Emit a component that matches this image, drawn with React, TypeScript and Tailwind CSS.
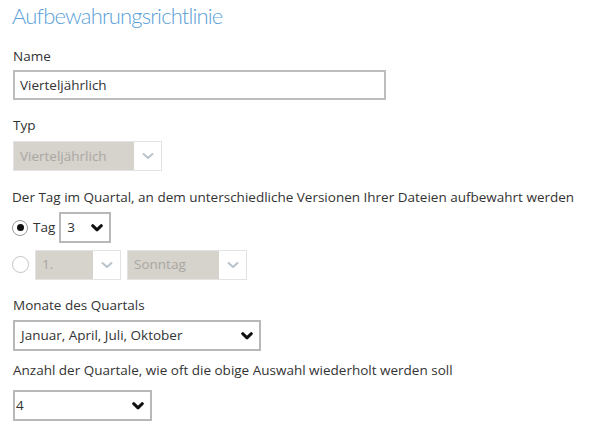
import React from "react";

const Chevron = () => (
  <svg width="12" height="8" viewBox="0 0 12 8">
    <path d="M1.7 1.7 L6 5.8 L10.3 1.7" fill="none" stroke="#111" strokeWidth="3" strokeLinecap="round" strokeLinejoin="round" />
  </svg>
);

const ThinChevron = () => (
  <svg width="12" height="8" viewBox="0 0 12 8">
    <path d="M1.5 2 L6 6 L10.5 2" fill="none" stroke="#b9c4cc" strokeWidth="2" strokeLinecap="round" strokeLinejoin="round" />
  </svg>
);

const DisabledSelect = ({ text, w, arrowW }: { text: string; w: string; arrowW: string }) => (
  <div className={`flex h-[30px] ${w} border border-[#e3e3e3]`}>
    <div className="flex-1 bg-[#d6d2cc] flex items-center pl-[6px] text-[#aaa7a3] text-[13.5px]">{text}</div>
    <div className={`${arrowW} bg-white flex items-center justify-center`}>
      <ThinChevron />
    </div>
  </div>
);

const Select = ({ text, w, pl = "pl-[6px]" }: { text: string; w: string; pl?: string }) => (
  <div className={`flex items-center justify-between h-[31px] ${w} border-2 border-[#b8b8b8] ${pl} pr-[6px] text-[13.5px] text-[#333]`}>
    <span>{text}</span>
    <Chevron />
  </div>
);

export default function App() {
  return (
    <div className="w-[593px] h-[431px] bg-white pl-[13px] pt-[3px] text-[#333]" style={{ fontFamily: '"Open Sans", sans-serif' }}>
      <div className="text-[22px] font-light text-[#5a9fd8] leading-[30px] tracking-[-0.85px] -mt-[2px] -ml-[1px]" style={{ fontFamily: 'Lato, sans-serif' }}>Aufbewahrungsrichtlinie</div>
      <div className="mt-[17px] text-[13.5px] leading-[16px]">Name</div>
      <div className="mt-[6px] w-[373px] h-[30px] border-2 border-[#bdbdbd] flex items-center pl-[5px] text-[13.5px]">Vierteljährlich</div>
      <div className="mt-[17px] text-[13.5px] leading-[16px]">Typ</div>
      <div className="mt-[8px]">
        <DisabledSelect text="Vierteljährlich" w="w-[149px]" arrowW="w-[27px]" />
      </div>
      <div className="mt-[18px] text-[13.5px] leading-[16px] -ml-[1px]">Der Tag im Quartal, an dem unterschiedliche Versionen Ihrer Dateien aufbewahrt werden</div>
      <div className="mt-[7px] flex items-center h-[31px]">
        <div className="w-[16px] h-[16px] rounded-full border border-[#999] flex items-center justify-center -ml-[1px]">
          <div className="w-[7px] h-[7px] rounded-full bg-[#111]" />
        </div>
        <span className="ml-[5px] text-[13.5px] mr-[4px]">Tag</span>
        <Select text="3" w="w-[52px]" />
      </div>
      <div className="mt-[6px] flex items-center h-[31px]">
        <div className="w-[17px] h-[17px] rounded-full border border-[#c4c4c4] -ml-[1px]" />
        <div className="ml-[6px]">
          <DisabledSelect text="1." w="w-[86px]" arrowW="w-[27px]" />
        </div>
        <div className="ml-[6px]">
          <DisabledSelect text="Sonntag" w="w-[120px]" arrowW="w-[27px]" />
        </div>
      </div>
      <div className="mt-[17px] text-[13.5px] leading-[16px]">Monate des Quartals</div>
      <div className="mt-[7px]">
        <Select text="Januar, April, Juli, Oktober" w="w-[248px]" />
      </div>
      <div className="mt-[11px] text-[13.5px] leading-[16px]">Anzahl der Quartale, wie oft die obige Auswahl wiederholt werden soll</div>
      <div className="mt-[12px]">
        <Select text="4" w="w-[139px]" pl="pl-[1px]" />
      </div>
    </div>
  );
}
